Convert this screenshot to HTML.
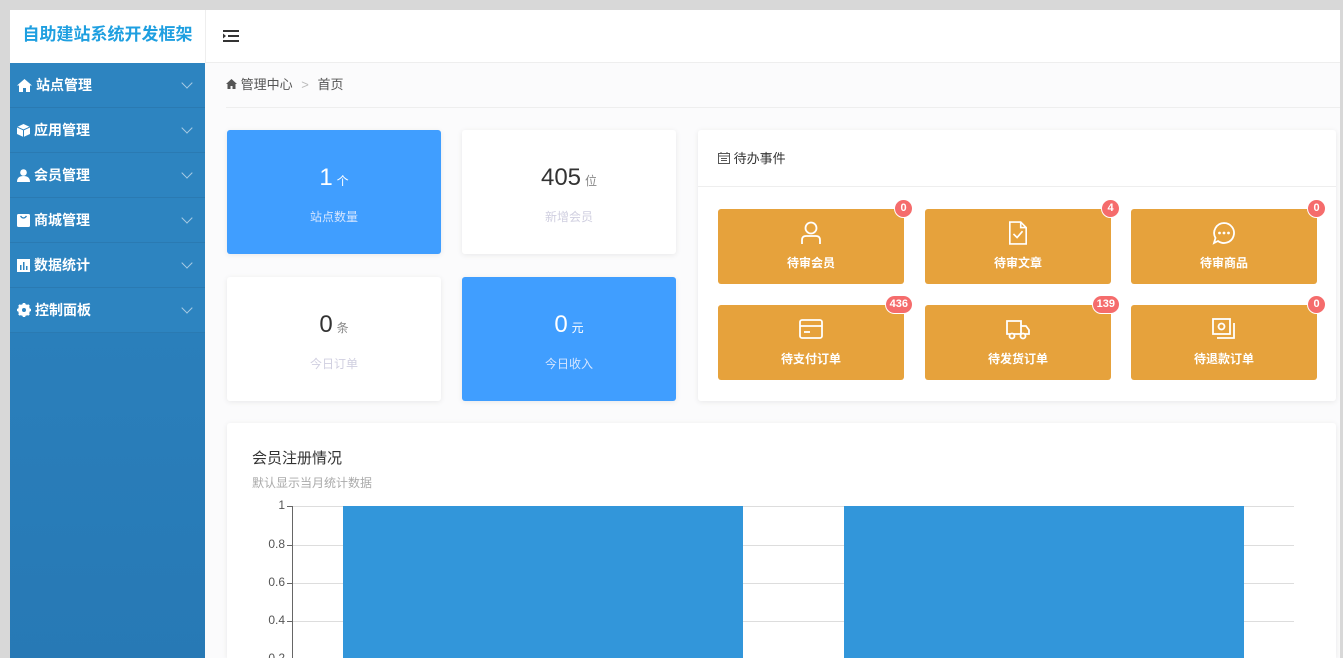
<!DOCTYPE html>
<html style="overflow:hidden;height:658px"><head><meta charset="utf-8"><style>
*{margin:0;padding:0;box-sizing:border-box}
body{width:1343px;height:658px;overflow:hidden;background:#d8d8d8;font-family:"Liberation Sans","Noto Sans CJK SC",sans-serif;position:relative}
.abs{position:absolute}
.logo{left:10px;top:10px;width:195px;height:53px;background:#fff;color:#1e9fe0;font-weight:bold;font-size:17px;line-height:50px;text-align:center}
.hdr{left:205px;top:10px;width:1135px;height:53px;background:#fff;border-left:1px solid #eee;border-bottom:1px solid #eee}
.side{left:10px;top:63px;width:195px;height:595px;background:linear-gradient(#2d84c0,#2779b5)}
.mi{height:45px;border-bottom:1px solid #2a7ab2;color:#fff;font-weight:bold;font-size:14px;line-height:44px;padding-left:7px;position:relative;background:#2d84c0}
.mi svg{vertical-align:-2px;margin-right:4px}
.mi .ch{position:absolute;right:14px;top:16px;width:8px;height:8px;border-right:1px solid #a8cbe4;border-bottom:1px solid #a8cbe4;transform:rotate(45deg)}
.main{left:205px;top:63px;width:1135px;height:595px;background:#fbfbfc}
.bc{left:226px;top:63px;width:1114px;height:45px;border-bottom:1px solid #eee;font-size:13px;color:#555;line-height:44px}
.card{background:#fff;border-radius:3px;box-shadow:0 1px 6px rgba(0,0,0,.08)}
.stat{width:214px;height:124px;text-align:center}
.stat .n{font-size:24px;color:#333;margin-top:34px;height:30px}
.stat .n small{font-size:12px;color:#888;margin-left:4px}
.stat .l{font-size:12px;color:#d0cfe0;margin-top:14px}
.blue{background:#409eff}
.blue .n,.blue .n small{color:#fff}
.blue .l{color:#d6e6ff}
.tile{width:186px;height:75px;background:#e6a23c;border-radius:3px;color:#fff;font-size:12px;font-weight:bold;text-align:center}
.tile svg{position:absolute;left:50%;top:24px;transform:translate(-50%,-50%)}
.tile .t{position:absolute;left:0;right:0;top:45px}
.bd{position:absolute;top:-10px;right:-9px;background:#f56c6c;color:#fff;border:1.5px solid #fff;border-radius:10px;font-size:11px;font-weight:bold;height:19px;line-height:16px;min-width:19px;padding:0 4px;text-align:center}
.yl{position:absolute;left:240px;width:45px;text-align:right;font-size:12px;color:#555}
.gl{position:absolute;left:292px;width:1002px;height:1px;background:#ddd}
</style></head><body>
<div class="abs logo">自助建站系统开发框架</div>
<div class="abs hdr"><svg class="abs" style="left:17px;top:19px" width="16" height="14"><rect x="0" y="1" width="16" height="2" fill="#333"/><rect x="5" y="6" width="11" height="2" fill="#333"/><rect x="0" y="11" width="16" height="2" fill="#333"/><path d="M0 4.5 L3 7 L0 9.5Z" fill="#333"/></svg></div>
<div class="abs side">
<div class="mi"><svg width="15" height="13" viewBox="0 0 15 13"><path d="M7.5 0 L15 6.5 L13 6.5 L13 13 L9 13 L9 9 L6 9 L6 13 L2 13 L2 6.5 L0 6.5Z" fill="#fff"/></svg>站点管理<span class="ch"></span></div>
<div class="mi"><svg width="13" height="13" viewBox="0 0 13 13"><path d="M6.5 0 L13 3 L13 10 L6.5 13 L0 10 L0 3Z" fill="#fff"/><path d="M0 3 L6.5 6 L13 3 M6.5 6 V13" stroke="#2d84c0" fill="none"/></svg>应用管理<span class="ch"></span></div>
<div class="mi"><svg width="13" height="13" viewBox="0 0 13 13"><circle cx="6.5" cy="3.5" r="3.3" fill="#fff"/><path d="M0 13 Q0 7 6.5 7 Q13 7 13 13Z" fill="#fff"/></svg>会员管理<span class="ch"></span></div>
<div class="mi"><svg width="13" height="14" viewBox="0 0 13 14"><rect x="0" y="1" width="13" height="13" rx="1.5" fill="#fff"/><path d="M3.5 3 Q6.5 7 9.5 3" stroke="#2d84c0" fill="none" stroke-width="1.3"/></svg>商城管理<span class="ch"></span></div>
<div class="mi"><svg width="13" height="13" viewBox="0 0 13 13"><rect width="13" height="13" fill="#fff"/><rect x="3" y="6" width="1.5" height="5" fill="#2d84c0"/><rect x="6" y="3" width="1.5" height="8" fill="#2d84c0"/><rect x="9" y="7" width="1.5" height="4" fill="#2d84c0"/></svg>数据统计<span class="ch"></span></div>
<div class="mi"><svg width="14" height="14" viewBox="0 0 14 14"><circle cx="7" cy="7" r="4.5" fill="none" stroke="#fff" stroke-width="3"/><g stroke="#fff" stroke-width="2.6"><path d="M7 0V14M0 7H14M2 2L12 12M12 2L2 12"/></g><circle cx="7" cy="7" r="2" fill="#2d84c0"/></svg>控制面板<span class="ch"></span></div>
</div>
<div class="abs main"></div>
<div class="abs bc"><svg style="vertical-align:-1px" width="11" height="11" viewBox="0 0 11 11"><path d="M5.5 0 L11 5 L9.5 5 L9.5 10 L6.5 10 L6.5 7 L4.5 7 L4.5 10 L1.5 10 L1.5 5 L0 5Z" fill="#555"/></svg> 管理中心 <span style="color:#bbb;margin:0 5px">&gt;</span> 首页</div>

<div class="abs card stat blue" style="left:227px;top:130px"><div class="n">1<small>个</small></div><div class="l">站点数量</div></div>
<div class="abs card stat" style="left:462px;top:130px"><div class="n">405<small>位</small></div><div class="l">新增会员</div></div>
<div class="abs card stat" style="left:227px;top:277px"><div class="n">0<small>条</small></div><div class="l">今日订单</div></div>
<div class="abs card stat blue" style="left:462px;top:277px"><div class="n">0<small>元</small></div><div class="l">今日收入</div></div>

<div class="abs card" style="left:698px;top:130px;width:638px;height:271px">
<div style="height:57px;border-bottom:1px solid #eee;font-size:13px;color:#333;line-height:57px;padding-left:20px"><svg style="vertical-align:-1px" width="12" height="12" viewBox="0 0 12 12"><rect x=".5" y="1.5" width="11" height="10" fill="none" stroke="#555"/><path d="M.5 4H11.5M3 6.5H9M3 8.5H9M3 0V2M9 0V2" stroke="#555"/></svg> 待办事件</div>
</div>
<div class="abs tile" style="left:718px;top:209px"><span class="bd">0</span><svg width="22" height="24" viewBox="0 0 22 24"><circle cx="11" cy="7" r="5.5" fill="none" stroke="#fff" stroke-width="1.8"/><path d="M2 23 V19 Q2 15 6 15 H16 Q20 15 20 19 V23" fill="none" stroke="#fff" stroke-width="1.8"/></svg><div class="t">待审会员</div></div>
<div class="abs tile" style="left:925px;top:209px"><span class="bd">4</span><svg width="20" height="26" viewBox="0 0 22 26"><path d="M2 1 H14 L20 7 V25 H2Z M14 1 V7 H20" fill="none" stroke="#fff" stroke-width="1.8"/><path d="M6 14 L10 18 L16 11" fill="none" stroke="#fff" stroke-width="1.8"/></svg><div class="t">待审文章</div></div>
<div class="abs tile" style="left:1131px;top:209px"><span class="bd">0</span><svg width="24" height="24" viewBox="0 0 24 24"><path d="M12 2 A10 10 0 1 1 6 20 L2 22 L3.5 17 A10 10 0 0 1 12 2Z" fill="none" stroke="#fff" stroke-width="1.8"/><circle cx="7.5" cy="12" r="1.4" fill="#fff"/><circle cx="12" cy="12" r="1.4" fill="#fff"/><circle cx="16.5" cy="12" r="1.4" fill="#fff"/></svg><div class="t">待审商品</div></div>
<div class="abs tile" style="left:718px;top:305px"><span class="bd">436</span><svg width="24" height="22" viewBox="0 0 24 22"><rect x="1" y="2" width="22" height="18" rx="2" fill="none" stroke="#fff" stroke-width="1.8"/><path d="M1 8H23" stroke="#fff" stroke-width="1.8"/><path d="M5 14H11" stroke="#fff" stroke-width="1.8"/></svg><div class="t">待支付订单</div></div>
<div class="abs tile" style="left:925px;top:305px"><span class="bd">139</span><svg width="24" height="22" viewBox="0 0 24 22"><path d="M1 3H15V16H1Z M15 8H20L23 12V16H15" fill="none" stroke="#fff" stroke-width="1.8"/><circle cx="6" cy="18" r="2.5" fill="#e6a23c" stroke="#fff" stroke-width="1.8"/><circle cx="17" cy="18" r="2.5" fill="#e6a23c" stroke="#fff" stroke-width="1.8"/></svg><div class="t">待发货订单</div></div>
<div class="abs tile" style="left:1131px;top:305px"><span class="bd">0</span><svg width="24" height="22" viewBox="0 0 24 22"><rect x="1" y="1" width="17" height="15" fill="none" stroke="#fff" stroke-width="1.8"/><path d="M5 20H22V5" fill="none" stroke="#fff" stroke-width="1.8"/><circle cx="9.5" cy="8.5" r="3" fill="none" stroke="#fff" stroke-width="1.8"/></svg><div class="t">待退款订单</div></div>

<div class="abs card" style="left:227px;top:423px;width:1109px;height:235px;border-radius:3px 3px 0 0"></div>
<div class="abs" style="left:252px;top:447px;font-size:15px;color:#333">会员注册情况</div>
<div class="abs" style="left:252px;top:474px;font-size:12px;color:#aaa">默认显示当月统计数据</div>
<div class="gl" style="top:506px"></div><div class="gl" style="top:545px"></div><div class="gl" style="top:583px"></div><div class="gl" style="top:621px"></div>
<div class="yl" style="top:498px">1</div><div class="yl" style="top:537px">0.8</div><div class="yl" style="top:575px">0.6</div><div class="yl" style="top:613px">0.4</div><div class="yl" style="top:651px">0.2</div>
<div class="abs" style="left:292px;top:506px;width:1px;height:152px;background:#666"></div>
<div class="abs" style="left:287px;top:506px;width:5px;height:1px;background:#666"></div>
<div class="abs" style="left:287px;top:545px;width:5px;height:1px;background:#666"></div>
<div class="abs" style="left:287px;top:583px;width:5px;height:1px;background:#666"></div>
<div class="abs" style="left:287px;top:621px;width:5px;height:1px;background:#666"></div>
<div class="abs" style="left:343px;top:506px;width:400px;height:152px;background:#3296da"></div>
<div class="abs" style="left:844px;top:506px;width:400px;height:152px;background:#3296da"></div>
</body></html>
